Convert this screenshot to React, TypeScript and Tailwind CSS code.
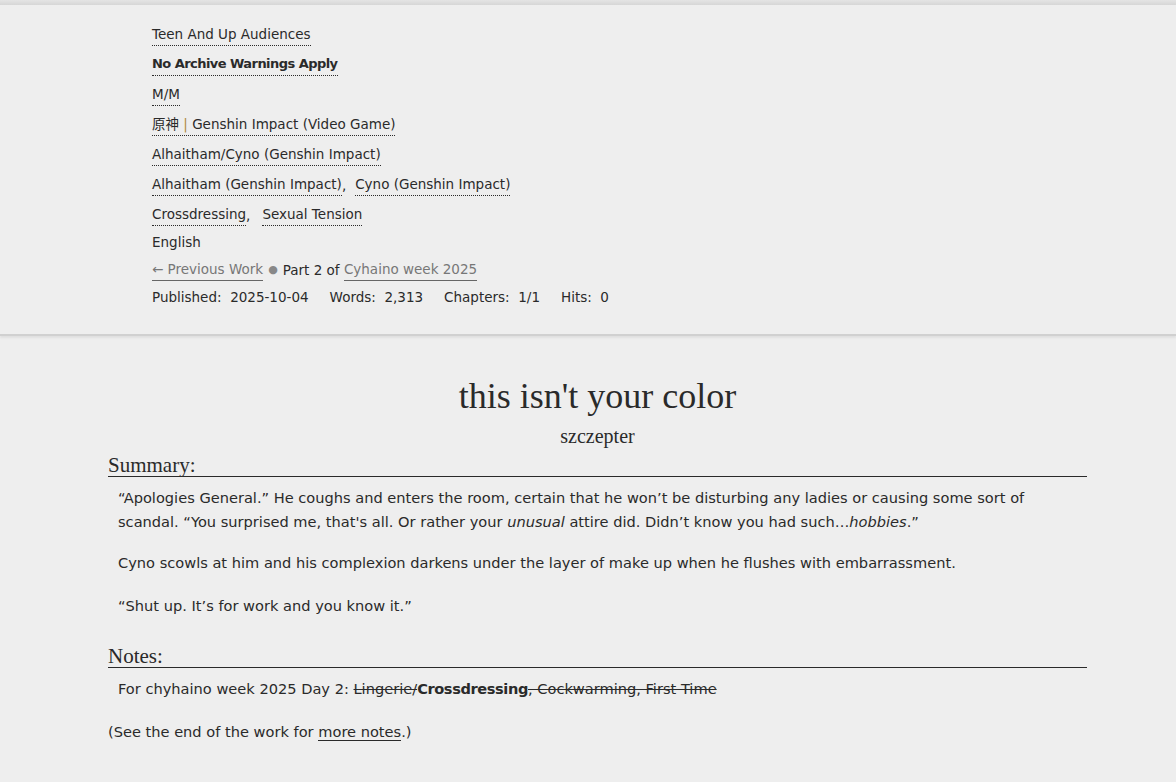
const sans = "font-['DejaVu_Sans',Verdana,sans-serif]";
const serif = "font-['Liberation_Serif','DejaVu_Serif',Georgia,serif]";

function Tag({ children, bold = false }: { children: React.ReactNode; bold?: boolean }) {
  return (
    <a
      className={`border-b border-dotted border-[#2a2a2a] pb-[1px] text-[#2a2a2a] ${
        bold ? "text-[13px] font-bold tracking-[-0.55px]" : ""
      }`}
    >
      {children}
    </a>
  );
}

function MetaRow({ children }: { children: React.ReactNode }) {
  return <div className="flex h-[30px] items-center">{children}</div>;
}

export default function App() {
  return (
    <div className={`min-h-[782px] bg-[#eeeeee] text-[#2a2a2a] ${sans} text-[13.5px]`}>
      <div className="h-[5px] bg-gradient-to-b from-[#e4e4e4] to-[#d6d6d6]" />
      <div className="border-b-[2px] border-[#d0d0d0] pl-[152px] pt-[15px] pb-[25px] shadow-[0_2px_2px_rgba(0,0,0,0.06)]">
        <MetaRow>
          <Tag>Teen And Up Audiences</Tag>
        </MetaRow>
        <MetaRow>
          <Tag bold>No Archive Warnings Apply</Tag>
        </MetaRow>
        <MetaRow>
          <Tag>M/M</Tag>
        </MetaRow>
        <MetaRow>
          <Tag>
            <span className="font-['DejaVu_Sans','Noto_Sans_CJK_SC',sans-serif]">原神</span>{" "}
            <span className="text-[#b08a3a]">|</span> Genshin Impact (Video Game)
          </Tag>
        </MetaRow>
        <MetaRow>
          <Tag>Alhaitham/Cyno (Genshin Impact)</Tag>
        </MetaRow>
        <MetaRow>
          <Tag>Alhaitham (Genshin Impact)</Tag>
          <span className="mr-[9px]">,</span>
          <Tag>Cyno (Genshin Impact)</Tag>
        </MetaRow>
        <MetaRow>
          <Tag>Crossdressing</Tag>
          <span className="mr-[12px]">,</span>
          <Tag>Sexual Tension</Tag>
        </MetaRow>
        <div className="flex h-[25px] items-center">English</div>
        <div className="flex h-[30px] items-center">
          <a className="border-b border-[#666] text-[#777]">← Previous Work</a>
          <span className="mx-[5px] text-[11px] text-[#888]">●</span>
          <span>Part 2 of&nbsp;</span>
          <a className="border-b border-[#666] text-[#777]">Cyhaino week 2025</a>
        </div>
        <div className="flex h-[24px] items-center gap-[21px]">
          <span>Published:&nbsp; 2025-10-04</span>
          <span>Words:&nbsp; 2,313</span>
          <span>Chapters:&nbsp; 1/1</span>
          <span>Hits:&nbsp; 0</span>
        </div>
      </div>

      <div className="mx-[108px] mr-[89px] pt-[40px] text-[14.6px]">
        <h2 className={`${serif} text-center text-[36px] leading-[40px] text-[#2a2a2a]`}>
          this isn't your color
        </h2>
        <div className={`${serif} mt-[8px] text-center text-[20px] leading-[24px]`}>szczepter</div>

        <h3 className={`${serif} mt-[6px] border-b border-[#2a2a2a] text-[21px] leading-[22px]`}>
          Summary:
        </h3>
        <div className="pl-[10px] pt-[9px] leading-[24px]">
          <p>
            “Apologies General.” He coughs and enters the room, certain that he won’t be disturbing any ladies or
            causing some sort of scandal. “You surprised me, that's all. Or rather your <em>unusual</em> attire did.
            Didn’t know you had such…<em>hobbies</em>.”
          </p>
          <p className="mt-[17px]">
            Cyno scowls at him and his complexion darkens under the layer of make up when he flushes with
            embarrassment.
          </p>
          <p className="mt-[19px]">“Shut up. It’s for work and you know it.”</p>
        </div>

        <h3 className={`${serif} mt-[27px] border-b border-[#2a2a2a] text-[21px] leading-[22px]`}>Notes:</h3>
        <div className="pl-[10px] pt-[9px] leading-[24px]">
          <p>
            For chyhaino week 2025 Day 2: <s>Lingerie/</s>
            <b className="tracking-[-0.4px]">Crossdressing</b>
            <s>, Cockwarming, First Time</s>
          </p>
        </div>
        <p className="mt-[19px] leading-[24px]">
          (See the end of the work for <a className="border-b border-[#2a2a2a]">more notes</a>.)
        </p>
      </div>
    </div>
  );
}
